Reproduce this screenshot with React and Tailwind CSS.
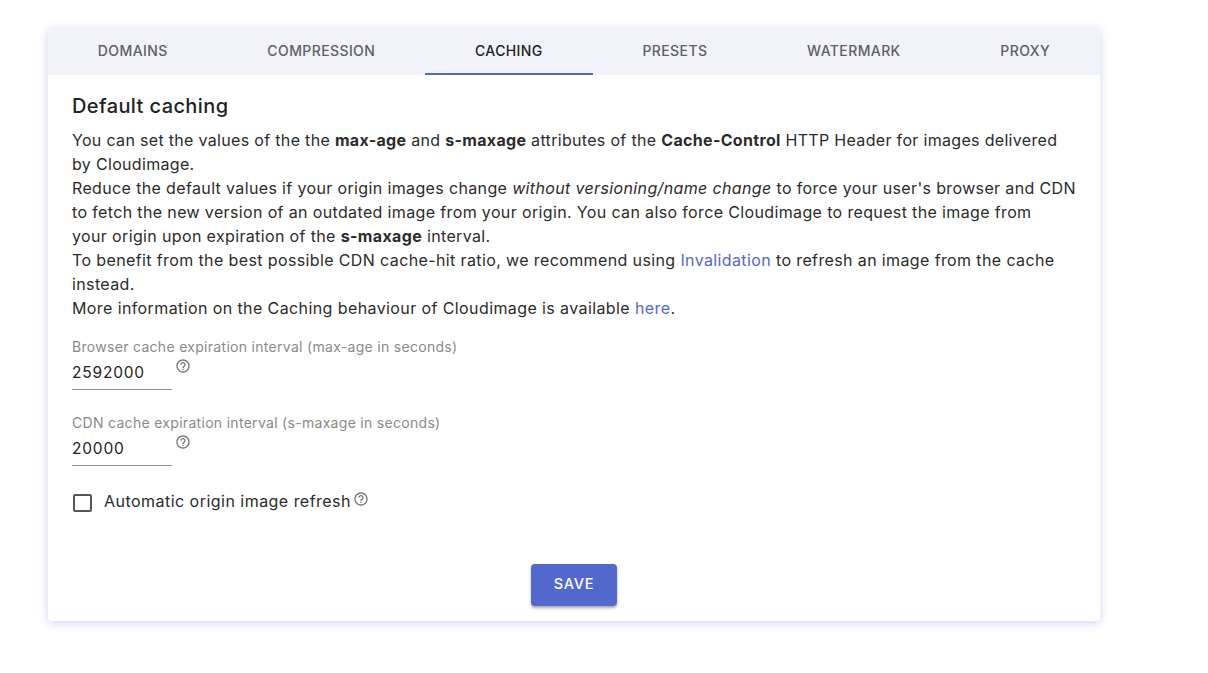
import React from 'react';

const tabs = ['DOMAINS', 'COMPRESSION', 'CACHING', 'PRESETS', 'WATERMARK', 'PROXY'];

function HelpIcon({ className }) {
  return (
    <svg viewBox="0 0 24 24" className={className} fill="#757575">
      <path d="M11 18h2v-2h-2v2zm1-16C6.48 2 2 6.48 2 12s4.480 10 10 10 10-4.480 10-10S17.520 2 12 2zm0 18c-4.410 0-8-3.590-8-8s3.590-8 8-8 8 3.590 8 8-3.590 8-8 8zm0-14c-2.210 0-4 1.790-4 4h2c0-1.100.9-2 2-2s2 .9 2 2c0 2-3 1.750-3 5h2c0-2.250 3-2.500 3-5 0-2.210-1.790-4-4-4z" />
    </svg>
  );
}

function Field({ label, value }) {
  return (
    <div className="flex flex-col">
      <label className="text-[14px] leading-[18px] text-[#8a8a8a] tracking-[0.3px]">{label}</label>
      <div className="flex items-start">
        <div className="w-[100px] h-[34px] border-b border-[#8f8f8f] pt-[5px] text-[15.500px] leading-[24px] text-[#222] tracking-[0.8px]">
          {value}
        </div>
        <HelpIcon className="w-[16px] h-[16px] ml-[3px] mt-[2px]" />
      </div>
    </div>
  );
}

export default function App() {
  return (
    <div className="min-h-screen bg-white pt-[28px] pl-[48px] font-['Inter',sans-serif]">
      <div className="w-[1052px] h-[593px] bg-white rounded-[4px] shadow-[0_2px_10px_rgba(84,103,204,0.28)] overflow-hidden flex flex-col">
        {/* tabs */}
        <div className="flex h-[47px] bg-[#f1f2fa] shrink-0">
          {tabs.map((t) => (
            <div
              key={t}
              className={`flex-auto px-[49px] pb-[1px] flex items-center justify-center text-[14px] font-medium tracking-[0.4px] border-b-2 ${
                t === 'CACHING' ? 'text-[#222] border-[#5268cc]' : 'text-[#5f5f66] border-transparent'
              }`}
            >
              {t}
            </div>
          ))}
        </div>

        <div className="flex flex-col flex-1 px-[24px] pt-[19px]">
          <h2 className="text-[20px] leading-[24px] font-medium text-[#222] tracking-[0.4px]">Default caching</h2>
          <div className="mt-[10px] text-[16px] leading-[24px] text-[#2b2b2b]">
            <p className="tracking-[0.32px]">
              You can set the values of the the <b>max-age</b> and <b>s-maxage</b> attributes of the <b>Cache-Control</b> HTTP Header for images delivered by Cloudimage.
            </p>
            <p className="tracking-[0.36px]">
              Reduce the default values if your origin images change <i>without versioning/name change</i> to force your user's browser and CDN to fetch the new version of an outdated image from your origin. You can also force Cloudimage to request the image from<br />your origin upon expiration of the <b>s-maxage</b> interval.
            </p>
            <p className="tracking-[0.38px]">
              To benefit from the best possible CDN cache-hit ratio, we recommend using <a className="text-[#5268cc]">Invalidation</a> to refresh an image from the cache instead.
            </p>
            <p className="tracking-[0.4px]">
              More information on the Caching behaviour of Cloudimage is available <a className="text-[#5268cc]">here</a>.
            </p>
          </div>

          <div className="mt-[18px] flex flex-col gap-[24px]">
            <Field label="Browser cache expiration interval (max-age in seconds)" value="2592000" />
            <Field label="CDN cache expiration interval (s-maxage in seconds)" value="20000" />
          </div>

          <div className="mt-[23px] flex items-center h-[24px] text-[16px] text-[#2b2b2b] tracking-[0.47px]">
            <span className="w-[19px] h-[18px] border-2 border-[#555] rounded-[2px] ml-[1px] mt-[3px]" />
            <span className="ml-[12px]">Automatic origin image refresh</span>
            <HelpIcon className="w-[16px] h-[16px] ml-[2px] mb-[4px]" />
          </div>

          <div className="flex justify-center mt-[51px]">
            <button className="w-[86px] h-[42px] rounded-[4px] bg-[#5268cc] text-white text-[14.500px] font-medium tracking-[0.7px] pb-[2px] shadow-[0_2px_3px_rgba(0,0,0,0.35)]">
              SAVE
            </button>
          </div>
        </div>
      </div>
    </div>
  );
}
